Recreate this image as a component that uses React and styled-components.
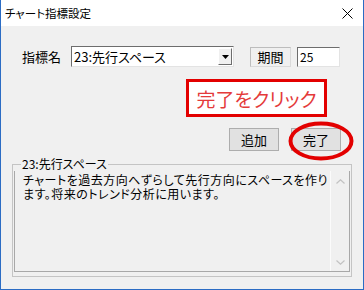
import React from "react";
import styled, { createGlobalStyle } from "styled-components";

const GlobalStyle = createGlobalStyle`
    html, body {
        margin: 0;
        padding: 0;
        background: #ffffff;
    }
`;

const Window = styled.div`
    width: 364px;
    height: 290px;
    box-sizing: border-box;
    border: 1px solid #2b6cc4;
    border-top: none;
    display: flex;
    flex-direction: column;
    font-family: "Noto Sans CJK JP", "Liberation Sans", sans-serif;
    font-feature-settings: "palt";
    color: #000;
`;

const TitleBar = styled.div`
    height: 26px;
    background: #ffffff;
    display: flex;
    align-items: center;
    justify-content: space-between;
    padding: 0 10px 0 4px;
    font-size: 11.5px;
`;

const Body = styled.div`
    flex: 1;
    background: #f0f0f0;
    display: flex;
    flex-direction: column;
`;

const FieldRow = styled.div`
    display: flex;
    align-items: center;
    margin-top: 20px;
    padding-left: 21px;
    height: 21px;
`;

const Label = styled.span`
    font-size: 13px;
    width: 49px;
`;

const Combo = styled.div`
    width: 163px;
    height: 21px;
    box-sizing: border-box;
    background: #fff;
    border: 1px solid;
    border-color: #6d6d6d #e3e3e3 #e3e3e3 #6d6d6d;
    display: flex;
    align-items: center;
    justify-content: space-between;
    padding: 1px;
    font-size: 13px;
`;

const ComboText = styled.span`
    padding-left: 1px;
`;

const DropButton = styled.div`
    width: 14px;
    height: 100%;
    box-sizing: border-box;
    background: #f0f0f0;
    border: 1px solid;
    border-color: #fff #6d6d6d #6d6d6d #fff;
    display: flex;
    align-items: center;
    justify-content: center;
`;

const StaticBox = styled.div`
    margin-left: 16px;
    width: 41px;
    height: 20px;
    box-sizing: border-box;
    border: 1px solid;
    border-color: #bdbdbd #dadada #dadada #bdbdbd;
    display: flex;
    align-items: center;
    justify-content: center;
    font-size: 13px;
`;

const NumberInput = styled.div`
    margin-left: 6px;
    width: 43px;
    height: 20px;
    box-sizing: border-box;
    background: #fff;
    border: 1px solid;
    border-color: #6d6d6d #e3e3e3 #e3e3e3 #6d6d6d;
    display: flex;
    align-items: center;
    padding-left: 2px;
    font-size: 12px;
`;

const CalloutRow = styled.div`
    display: flex;
    padding-left: 185px;
    margin-top: 12px;
`;

const Callout = styled.div`
    width: 141px;
    height: 38px;
    box-sizing: border-box;
    border: 3px solid #e30000;
    background: #fff;
    color: #e43a3a;
    font-size: 19px;
    display: flex;
    align-items: center;
    justify-content: center;
`;

const ButtonRow = styled.div`
    display: flex;
    justify-content: flex-end;
    gap: 12px;
    padding-right: 22px;
    margin-top: 11px;
`;

const ButtonWrap = styled.div`
    position: relative;
`;

const Button = styled.div`
    width: 50px;
    height: 23px;
    box-sizing: border-box;
    background: #e1e1e1;
    border: 1px solid #adadad;
    display: flex;
    align-items: center;
    justify-content: center;
    font-size: 13px;
`;

const Ring = styled.svg`
    position: absolute;
    left: -3px;
    top: -7px;
    pointer-events: none;
`;

const Group = styled.fieldset`
    margin: 6px 11px 0 11px;
    padding: 0 1px 4px 1px;
    border: 1px solid #c4c4c4;
    min-width: 0;
`;

const Legend = styled.legend`
    font-size: 12px;
    line-height: 14px;
    padding: 0 1px;
    margin-left: 7px;
`;

const Memo = styled.div`
    height: 101px;
    box-sizing: border-box;
    display: flex;
    border: 1px solid #a8a8a8;
    border-top: none;
`;

const MemoText = styled.div`
    flex: 1;
    font-size: 12px;
    line-height: 14px;
    padding: 2px 0 0 8px;
    letter-spacing: 0.5px;
    white-space: nowrap;
`;

const ScrollBar = styled.div`
    width: 18px;
    border-left: 1px solid #fbfbfb;
    display: flex;
    flex-direction: column;
    justify-content: space-between;
    align-items: center;
    padding: 8px 0 6px;
`;

const App = () => (
    <>
        <GlobalStyle />
        <Window>
            <TitleBar>
                <span>チャート指標設定</span>
                <svg width="11" height="11" viewBox="0 0 11 11">
                    <path d="M0.5 0.5 L10.5 10.5 M10.5 0.5 L0.5 10.5" stroke="#000" strokeWidth="1" />
                </svg>
            </TitleBar>
            <Body>
                <FieldRow>
                    <Label>指標名</Label>
                    <Combo>
                        <ComboText>23:先行スペース</ComboText>
                        <DropButton>
                            <svg width="7" height="4" viewBox="0 0 7 4">
                                <path d="M0 0 H7 L3.5 4 Z" fill="#000" />
                            </svg>
                        </DropButton>
                    </Combo>
                    <StaticBox>期間</StaticBox>
                    <NumberInput>25</NumberInput>
                </FieldRow>
                <CalloutRow>
                    <Callout>完了をクリック</Callout>
                </CalloutRow>
                <ButtonRow>
                    <Button>追加</Button>
                    <ButtonWrap>
                        <Button>完了</Button>
                        <Ring width="66" height="40" viewBox="0 0 66 40">
                            <ellipse cx="33" cy="20" rx="30.5" ry="17.5" fill="none" stroke="#e30000" strokeWidth="4" />
                        </Ring>
                    </ButtonWrap>
                </ButtonRow>
                <Group>
                    <Legend>23:先行スペース</Legend>
                    <Memo>
                        <MemoText>
                            チャートを過去方向へずらして先行方向にスペースを作り
                            <br />
                            ます。将来のトレンド分析に用います。
                        </MemoText>
                        <ScrollBar>
                            <svg width="9" height="5" viewBox="0 0 9 5">
                                <path d="M0.5 4.5 L4.5 0.8 L8.5 4.5" fill="none" stroke="#c2c2c2" strokeWidth="1.2" />
                            </svg>
                            <svg width="9" height="5" viewBox="0 0 9 5">
                                <path d="M0.5 0.5 L4.5 4.2 L8.5 0.5" fill="none" stroke="#c2c2c2" strokeWidth="1.2" />
                            </svg>
                        </ScrollBar>
                    </Memo>
                </Group>
            </Body>
        </Window>
    </>
);

export default App;
